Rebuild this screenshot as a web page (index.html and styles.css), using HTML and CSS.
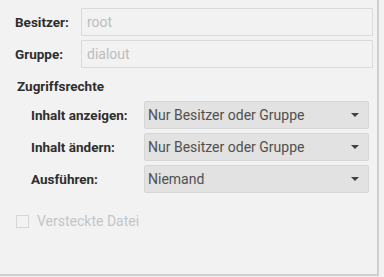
FILE: index.html
```html
<!DOCTYPE html>
<html lang="de">
<head>
    <meta charset="UTF-8">
    <title>Eigenschaften</title>
    <link rel="stylesheet" href="styles.css">
</head>
<body>
    <div class="panel">
        <div class="owner-rows">
            <label class="owner-label">Besitzer:</label>
            <div class="field">root</div>
            <label class="owner-label">Gruppe:</label>
            <div class="field">dialout</div>
        </div>

        <div class="section-title">Zugriffsrechte</div>

        <div class="perm-rows">
            <label class="perm-label">Inhalt anzeigen:</label>
            <div class="select">
                <span>Nur Besitzer oder Gruppe</span>
                <span class="arrow"></span>
            </div>
            <label class="perm-label">Inhalt ändern:</label>
            <div class="select">
                <span>Nur Besitzer oder Gruppe</span>
                <span class="arrow"></span>
            </div>
            <label class="perm-label">Ausführen:</label>
            <div class="select">
                <span>Niemand</span>
                <span class="arrow"></span>
            </div>
        </div>

        <div class="check-row">
            <span class="checkbox"></span>
            <span class="check-text">Versteckte Datei</span>
        </div>
    </div>
</body>
</html>
```

FILE: styles.css
```css
/* Global Styles */
body {
    margin: 0;
    padding: 0;
    background-color: #f2f2f2;
    font-family: Roboto, "Liberation Sans", Arial, sans-serif;
    font-size: 14px;
    color: #333333;
}

.panel {
    width: 377px;
    height: 274px;
    box-sizing: content-box;
    border-right: 2px solid #cfcfcf;
    border-bottom: 2px solid #cfcfcf;
    background-color: #f2f2f2;
}

.owner-rows {
    display: grid;
    grid-template-columns: 66px 292px;
    row-gap: 4px;
    align-items: center;
    padding: 8px 0 0 15px;
}

.owner-label,
.perm-label,
.section-title {
    font-weight: bold;
    font-size: 13.5px;
    color: #2e2e2e;
}

.field {
    height: 28px;
    box-sizing: border-box;
    border: 1px solid #dadada;
    padding: 0 5px;
    line-height: 26px;
    color: #bdbdbd;
}

.section-title {
    padding: 10px 0 0 17px;
    line-height: 16px;
}

.perm-rows {
    display: grid;
    grid-template-columns: 113px 225px;
    row-gap: 4px;
    align-items: center;
    padding: 7px 0 0 31px;
}

.select {
    height: 28px;
    box-sizing: border-box;
    display: flex;
    align-items: center;
    justify-content: space-between;
    padding: 0 9px 0 3px;
    background-color: #e2e2e2;
    border: 1px solid #d6d6d6;
    border-radius: 2px;
    color: #505050;
}

.arrow {
    width: 0;
    height: 0;
    border-left: 4px solid transparent;
    border-right: 4px solid transparent;
    border-top: 4px solid #404040;
}

.check-row {
    display: flex;
    align-items: center;
    gap: 8px;
    padding: 20px 0 0 16px;
}

.checkbox {
    width: 13px;
    height: 13px;
    box-sizing: border-box;
    border: 1px solid #d6d6d6;
}

.check-text {
    color: #c2c6cc;
}
```
